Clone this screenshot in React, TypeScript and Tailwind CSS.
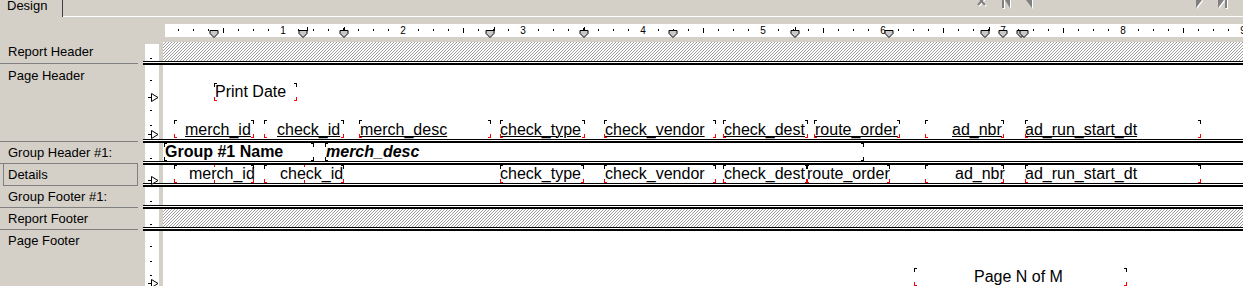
import React from "react";

const C0 = 163;

type Kind = "u" | "n" | "b" | "bi";
interface Fld {
  x: number;
  r: number;
  top: number;
  tx: number;
  text: string;
  kind: Kind;
  mid?: boolean;
  red?: boolean;
}

function Field({ f }: { f: Fld }) {
  const cls =
    f.kind === "u"
      ? "underline decoration-1 underline-offset-[1px] pt-[1px]"
      : f.kind === "b"
      ? "font-bold"
      : f.kind === "bi"
      ? "font-bold italic"
      : "";
  const red = f.red !== false;
  return (
    <div
      className="absolute h-[18px]"
      style={{ left: f.x - C0, top: f.top, width: f.r - f.x + 1 }}
    >
      <span
        className={`absolute top-0 whitespace-nowrap text-[16px] leading-[18px] text-black ${cls}`}
        style={{ left: f.tx - f.x }}
      >
        {f.text}
      </span>
      <span className="absolute left-0 top-0 h-[4px] w-[3px] border-l border-t border-black" />
      <span className="absolute right-0 top-0 h-[4px] w-[3px] border-r border-t border-black" />
      <span
        className={`absolute left-0 bottom-0 h-[4px] w-[3px] border-l border-b ${
          red ? "border-[#ff0000]" : "border-black"
        }`}
      />
      <span
        className={`absolute right-0 bottom-0 h-[4px] w-[3px] border-r border-b ${
          red ? "border-[#ff0000]" : "border-black"
        }`}
      />
      {f.mid && (
        <>
          <span className="absolute left-1/2 top-0 h-[2px] w-px bg-[#ff0000]" />
          <span className="absolute left-1/2 bottom-0 h-[3px] w-px bg-[#ff0000]" />
        </>
      )}
    </div>
  );
}

function Hatch({ id }: { id: string }) {
  return (
    <svg className="absolute inset-0 h-full w-full" shapeRendering="crispEdges">
      <defs>
        <pattern id={id} width="3" height="3" patternUnits="userSpaceOnUse">
          <rect x="2" y="0" width="1" height="1" fill="#9c9c9c" />
          <rect x="1" y="1" width="1" height="1" fill="#9c9c9c" />
          <rect x="0" y="2" width="1" height="1" fill="#9c9c9c" />
        </pattern>
      </defs>
      <rect width="100%" height="100%" fill={`url(#${id})`} />
    </svg>
  );
}

function Dash({ y }: { y: number }) {
  return <div className="absolute left-[5px] h-px w-[2px] bg-black" style={{ top: y }} />;
}

function Tri({ y }: { y: number }) {
  return (
    <svg className="absolute left-[3px] h-[9px] w-[11px] overflow-visible" style={{ top: y }}>
      <path d="M0 4.5 H3" stroke="black" strokeWidth="1" />
      <path d="M3.5 0.5 V8.5 L10 4.5 Z" fill="white" stroke="black" strokeWidth="1" />
    </svg>
  );
}

function Divider() {
  return (
    <div className="flex h-[4px] flex-col">
      <div className="h-px bg-black" />
      <div className="h-px bg-white" />
      <div className="h-[2px] bg-black" />
    </div>
  );
}

function LabelLine() {
  return (
    <div className="h-[4px] shrink-0">
      <div className="mt-[2px] h-px w-[138px] bg-[#808080]" />
    </div>
  );
}

interface SecProps {
  label: string;
  hCls: string;
  labelPt?: string;
  hatched?: string;
  marks?: React.ReactNode;
  children?: React.ReactNode;
  colCls?: string;
  selected?: boolean;
}

function Section({ label, hCls, labelPt = "pt-[2px]", hatched, marks, children, colCls = "", selected }: SecProps) {
  return (
    <div className="flex">
      <div className="flex w-[143px] shrink-0 flex-col">
        {selected ? (
          <div className="-mt-[2px] ml-[3px] h-[23px] w-[135px] border border-[#808080] pl-[4px] pt-[3px] text-[13px] leading-[15px]">
            {label}
          </div>
        ) : (
          <>
            <div className={`flex-1 pl-[8px] text-[13px] leading-[15px] ${labelPt}`}>{label}</div>
            <LabelLine />
          </>
        )}
      </div>
      <div className="flex flex-1 flex-col">
        <div className={`flex ${hCls}`}>
          <div className="w-[2px] bg-[#d4d0c8]" />
          <div className="flex w-[14px] flex-col">
            <div className={`relative flex-1 bg-white ${colCls}`}>{marks}</div>
          </div>
          <div className="w-[4px] bg-[#d4d0c8]" />
          <div className="relative flex-1 overflow-hidden bg-white">
            {hatched && <Hatch id={hatched} />}
            {children}
          </div>
        </div>
        <Divider />
      </div>
    </div>
  );
}

function Ruler() {
  const items: React.ReactNode[] = [];
  for (let k = 1; k <= 72; k++) {
    const x = 15 * k - 2;
    if (k % 8 === 0)
      items.push(
        <span
          key={k}
          className="absolute top-0 -ml-[6px] w-[12px] text-center text-[10px] leading-[13px] text-black"
          style={{ left: x }}
        >
          {k / 8}
        </span>
      );
    else if (k % 4 === 0)
      items.push(<div key={k} className="absolute top-[4px] h-[5px] w-px bg-black" style={{ left: x }} />);
    else items.push(<div key={k} className="absolute top-[5px] h-[2px] w-px bg-black" style={{ left: x }} />);
  }
  const markers: { x: number; v?: "c" | "r" }[] = [
    { x: 214 },
    { x: 303, v: "r" },
    { x: 344, v: "c" },
    { x: 490, v: "r" },
    { x: 584, v: "c" },
    { x: 673 },
    { x: 795, v: "c" },
    { x: 889 },
    { x: 985, v: "r" },
    { x: 1003 },
    { x: 1021 },
    { x: 1024 },
  ];
  return (
    <div className="relative ml-[165px] h-[13px] bg-white">
      {items}
      {markers.map((m, i) => (
        <svg
          key={i}
          className="absolute top-[3px] h-[12px] w-[11px] overflow-visible"
          style={{ left: m.x - 170 }}
        >
          <polygon points="1,3.5 9,3.5 9,6.5 5,10.5 1,6.5" fill="#c8c8c8" stroke="#000" strokeWidth="1" />
          {m.v === "c" && <path d="M5.5 0 V3.5" stroke="#000" strokeWidth="1" />}
          {m.v === "r" && <path d="M9.5 0 V4" stroke="#000" strokeWidth="1" />}
        </svg>
      ))}
    </div>
  );
}

function TopIcon({ kind }: { kind: "x" | "first" | "prev" | "next" | "last" }) {
  const g = "#808080";
  return (
    <svg className="h-[10px] w-[10px] shrink-0" viewBox="0 0 10 10">
      {kind === "x" && (
        <>
          <path d="M2 -2 L9 6 M9 -2 L2 6" stroke="#fff" strokeWidth="2" />
          <path d="M1 -3 L8 5 M8 -3 L1 5" stroke={g} strokeWidth="2" />
        </>
      )}
      {kind === "first" && (
        <>
          <rect x="2" y="-6" width="2" height="15" fill="#fff" />
          <polygon points="5,1 10,-6 10,9" fill="#fff" />
          <rect x="1" y="-7" width="2" height="15" fill={g} />
          <polygon points="4,0 9,-7 9,8" fill={g} />
        </>
      )}
      {kind === "prev" && (
        <>
          <polygon points="2,1 8,-6 8,9" fill="#fff" />
          <polygon points="1,0 7,-7 7,8" fill={g} />
        </>
      )}
      {kind === "next" && (
        <>
          <polygon points="2,-6 8,1 2,9" fill="#fff" />
          <polygon points="1,-7 7,0 1,8" fill={g} />
        </>
      )}
      {kind === "last" && (
        <>
          <polygon points="1,-6 7,1 1,9" fill="#fff" />
          <rect x="8" y="-6" width="2" height="15" fill="#fff" />
          <polygon points="0,-7 6,0 0,8" fill={g} />
          <rect x="7" y="-7" width="2" height="15" fill={g} />
        </>
      )}
    </svg>
  );
}

const phTop = 55;
const pageHeader: Fld[] = [
  { x: 214, r: 296, top: 18, tx: 215, text: "Print Date", kind: "n" },
  { x: 174, r: 253, top: phTop, tx: 185, text: "merch_id", kind: "u" },
  { x: 264, r: 343, top: phTop, tx: 277, text: "check_id", kind: "u" },
  { x: 359, r: 490, top: phTop, tx: 360, text: "merch_desc", kind: "u" },
  { x: 500, r: 584, top: phTop, tx: 500, text: "check_type", kind: "u" },
  { x: 604, r: 715, top: phTop, tx: 605, text: "check_vendor", kind: "u" },
  { x: 723, r: 807, top: phTop, tx: 724, text: "check_dest", kind: "u" },
  { x: 814, r: 899, top: phTop, tx: 815, text: "route_order", kind: "u" },
  { x: 925, r: 1003, top: phTop, tx: 952, text: "ad_nbr", kind: "u" },
  { x: 1025, r: 1200, top: phTop, tx: 1025, text: "ad_run_start_dt", kind: "u" },
];

const groupHeader: Fld[] = [
  { x: 164, r: 313, top: 0, tx: 165, text: "Group #1 Name", kind: "b", red: false },
  { x: 325, r: 863, top: 0, tx: 326, text: "merch_desc", kind: "bi", red: false },
];

const details: Fld[] = [
  { x: 174, r: 253, top: 0, tx: 189, text: "merch_id", kind: "n", mid: true },
  { x: 264, r: 343, top: 0, tx: 280, text: "check_id", kind: "n", mid: true },
  { x: 500, r: 583, top: 0, tx: 500, text: "check_type", kind: "n" },
  { x: 604, r: 715, top: 0, tx: 605, text: "check_vendor", kind: "n" },
  { x: 723, r: 807, top: 0, tx: 724, text: "check_dest", kind: "n" },
  { x: 806, r: 889, top: 0, tx: 807, text: "route_order", kind: "n" },
  { x: 925, r: 1003, top: 0, tx: 955, text: "ad_nbr", kind: "n" },
  { x: 1025, r: 1200, top: 0, tx: 1025, text: "ad_run_start_dt", kind: "n" },
];

const pageFooter: Fld[] = [
  { x: 914, r: 1126, top: 37, tx: 974, text: "Page N of M", kind: "n" },
];

export default function App() {
  return (
    <div className="h-[286px] w-[1243px] overflow-hidden bg-[#d4d0c8] font-['Liberation_Sans',Arial,sans-serif] text-black">
      {/* tab strip */}
      <div className="flex h-[17px]">
        <div className="w-[63px] shrink-0 border-r border-[#404040]">
          <div className="pl-[7px] text-[13px] leading-[12px]">Design</div>
        </div>
        <div className="flex flex-1 items-start border-b border-white">
          <div className="ml-[914px]">
            <TopIcon kind="x" />
          </div>
          <div className="ml-[14px]">
            <TopIcon kind="first" />
          </div>
          <div className="ml-[14px]">
            <TopIcon kind="prev" />
          </div>
          <div className="ml-[160px]">
            <TopIcon kind="next" />
          </div>
          <div className="ml-[13px]">
            <TopIcon kind="last" />
          </div>
        </div>
      </div>
      <div className="h-[7px]" />
      <Ruler />
      <div className="h-[5px]" />

      <Section
        label="Report Header"
        hCls="h-[19px]"
        hatched="hatchRH"
        colCls="mt-[2px]"
        marks={<Dash y={14} />}
      />

      <Section
        label="Page Header"
        hCls="h-[74px]"
        labelPt="pt-[3px]"
        marks={
          <>
            <Dash y={15} />
            <Tri y={28} />
            <Dash y={45} />
            <Dash y={60} />
            <Tri y={65} />
          </>
        }
      >
        {pageHeader.map((f, i) => (
          <Field key={i} f={f} />
        ))}
      </Section>

      <Section label="Group Header #1:" hCls="h-[18px]" marks={<Dash y={15} />}>
        {groupHeader.map((f, i) => (
          <Field key={i} f={f} />
        ))}
      </Section>

      <Section label="Details" hCls="h-[18px]" selected marks={<Tri y={11} />}>
        {details.map((f, i) => (
          <Field key={i} f={f} />
        ))}
      </Section>

      <Section label="Group Footer #1:" hCls="h-[18px]" marks={<Dash y={14} />} />

      <Section label="Report Footer" hCls="h-[18px]" hatched="hatchRF" marks={<Dash y={15} />} />

      <Section
        label="Page Footer"
        hCls="h-[60px]"
        marks={
          <>
            <Dash y={15} />
            <Dash y={30} />
            <Dash y={44} />
            <Tri y={48} />
          </>
        }
      >
        {pageFooter.map((f, i) => (
          <Field key={i} f={f} />
        ))}
      </Section>
    </div>
  );
}
